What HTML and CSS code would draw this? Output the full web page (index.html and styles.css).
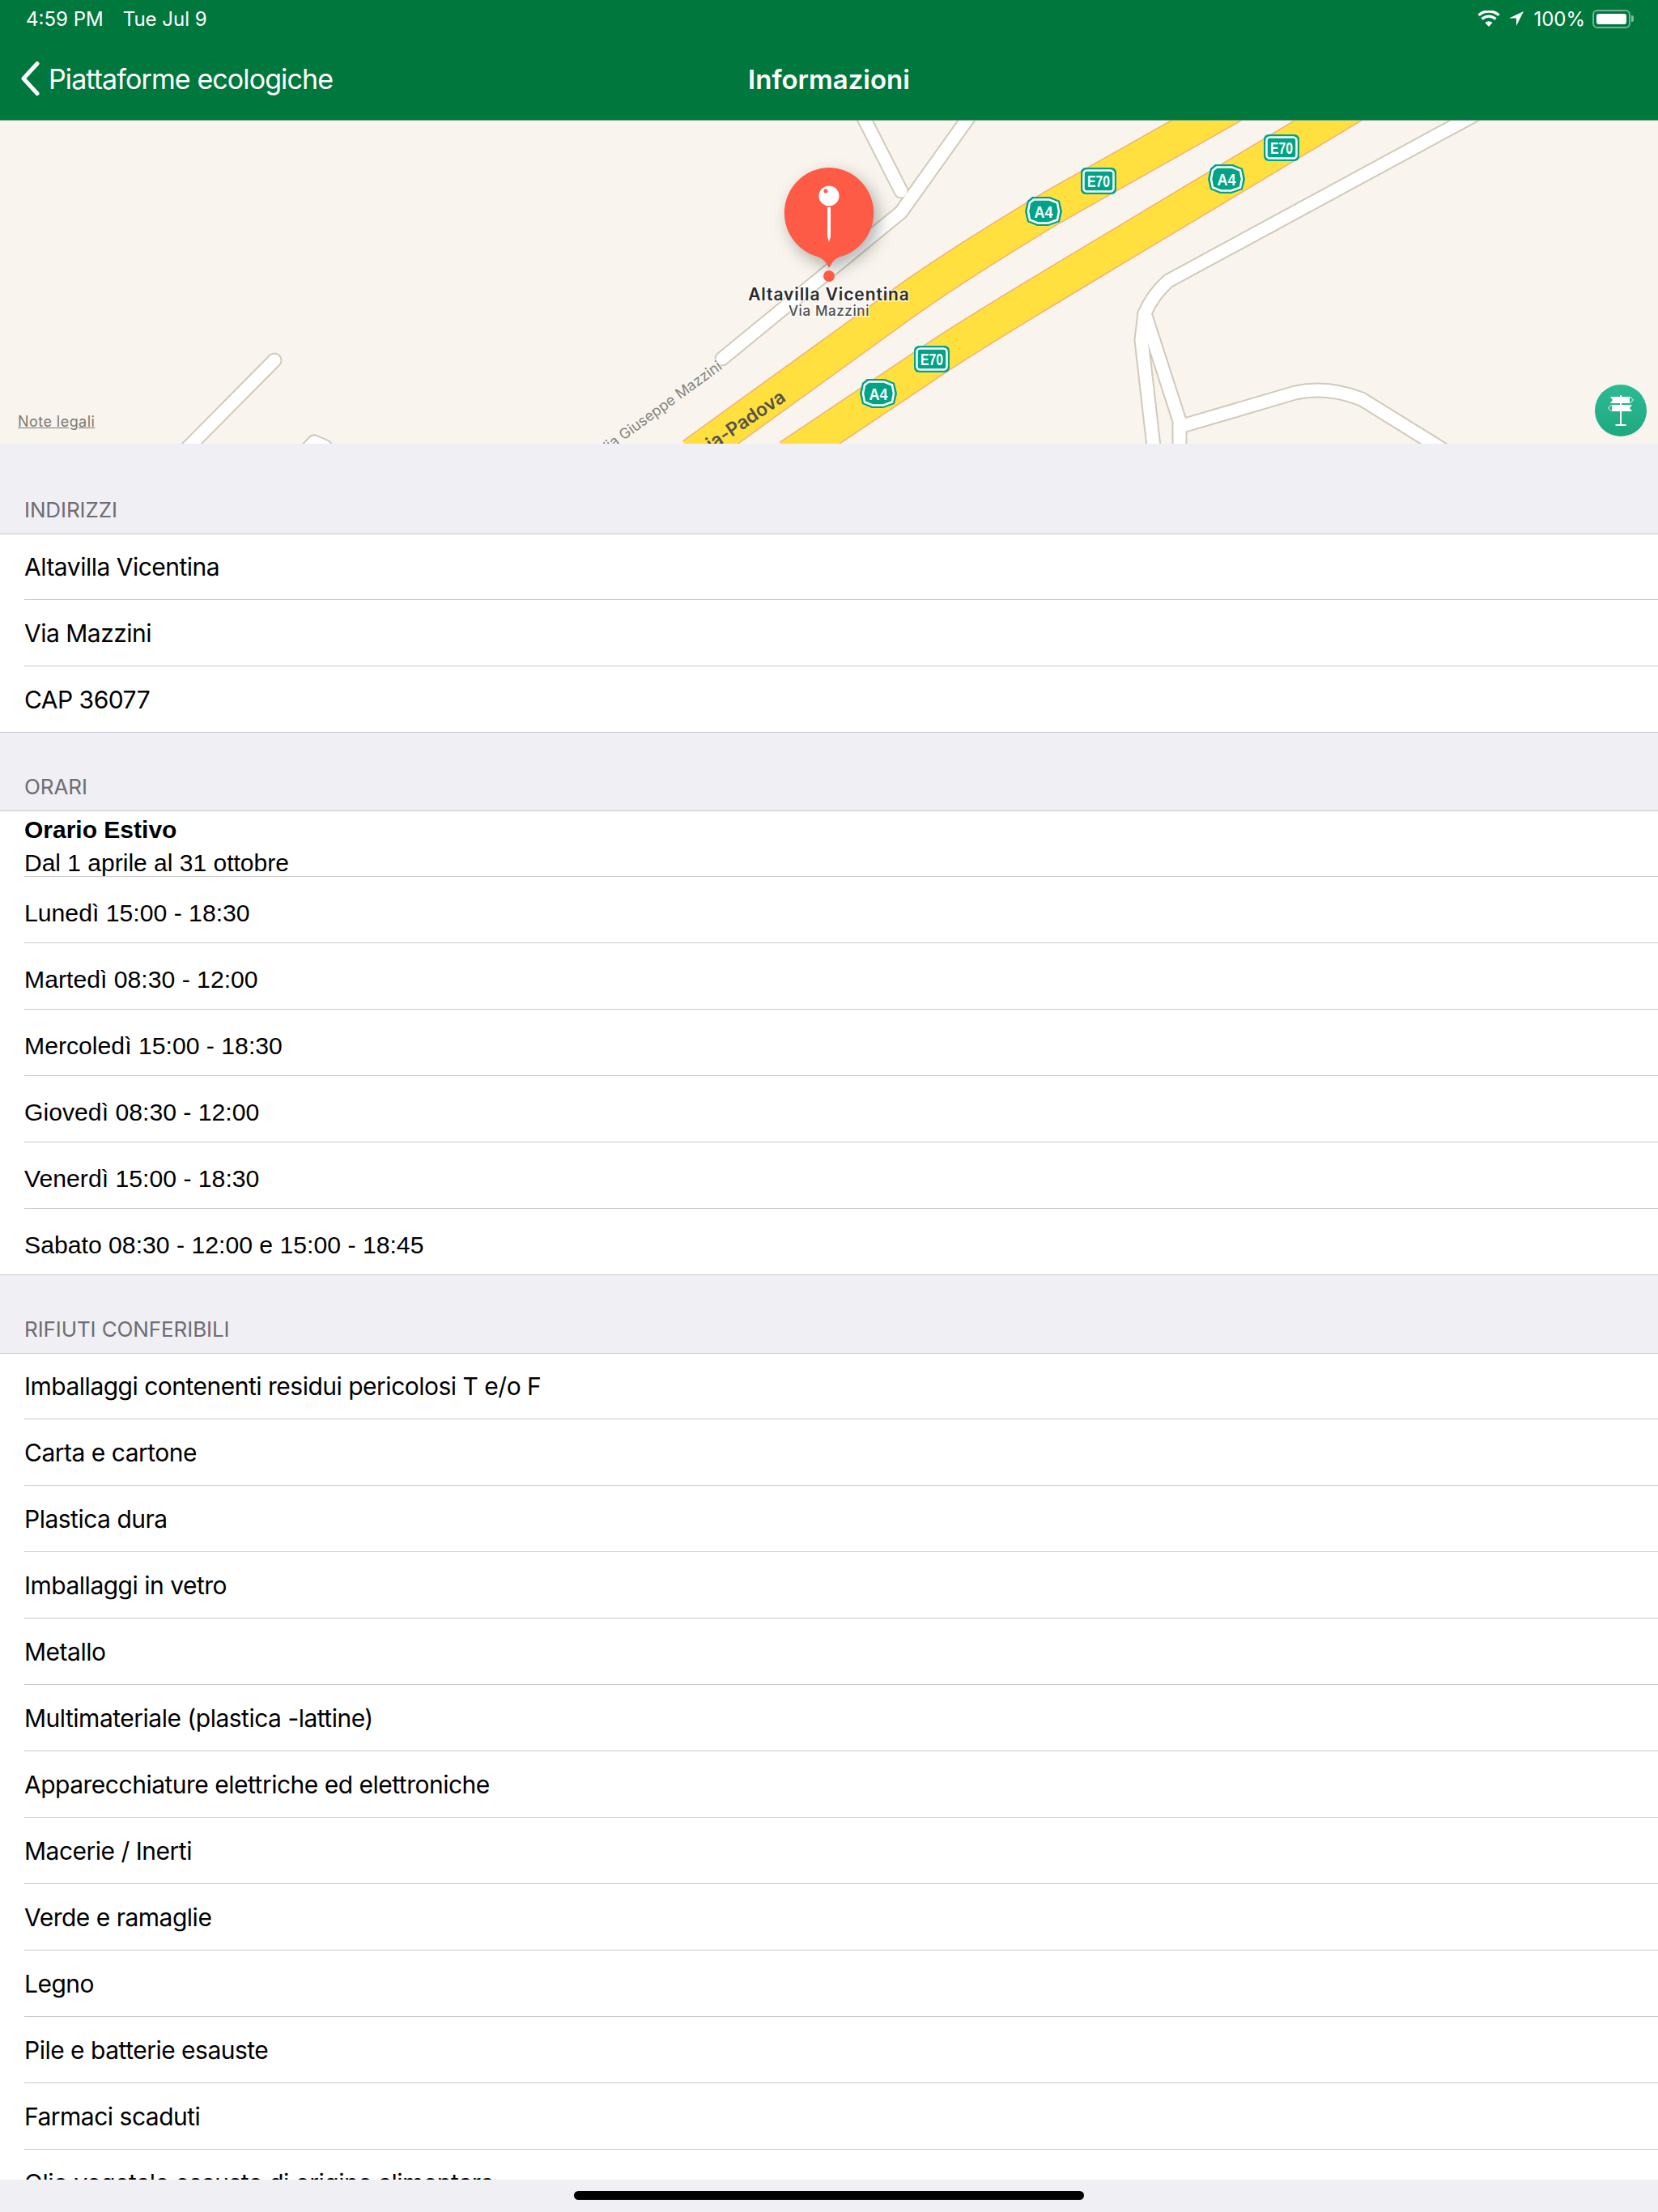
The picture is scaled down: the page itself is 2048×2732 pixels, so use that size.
FILE: index.html
```html
<!DOCTYPE html>
<html lang="it">
<head>
  <meta charset="UTF-8">
  <meta name="viewport" content="width=device-width, initial-scale=1">
  <title>Informazioni</title>
  <link rel="stylesheet" href="styles.css">
</head>
<body>
  <div class="screen">
    <header class="topbar">
      <div class="statusbar">
        <div class="status-time">
          <span>4:59 PM</span>
          <span>Tue Jul 9</span>
        </div>
        <div class="status-right">
          <svg class="icon-wifi" width="28" height="20" viewBox="0 0 28 20">
            <path d="M14 20l-4.500-5a6.500 6.500 0 0 1 9 0z" fill="#fff"/>
            <path d="M5.500 10.500a12.500 12.500 0 0 1 17 0" fill="none" stroke="#fff" stroke-width="3.400"/>
            <path d="M1.500 5.800a18.500 18.500 0 0 1 25 0" fill="none" stroke="#fff" stroke-width="3.400"/>
          </svg>
          <svg class="icon-arrow" width="20" height="20" viewBox="0 0 20 20">
            <path d="M19 1L1 9.500h9V19z" fill="#fff"/>
          </svg>
          <span>100%</span>
          <div class="battery">
            <div class="battery-body"><div class="battery-fill"></div></div>
            <div class="battery-tip"></div>
          </div>
        </div>
      </div>
      <nav class="navbar">
        <a class="back" href="#">
          <svg width="26" height="44" viewBox="0 0 26 44">
            <path d="M22 3.500L5 22l17 18.500" fill="none" stroke="#fff" stroke-width="5" stroke-linecap="round" stroke-linejoin="round"/>
          </svg>
          <span>Piattaforme ecologiche</span>
        </a>
        <h1>Informazioni</h1>
      </nav>
    </header>

    <div class="map">
      <svg class="map-canvas" width="2048" height="400" viewBox="0 148 2048 400">
        <g class="road-edge">
          <path d="M1064 140L1113 236"/>
          <path d="M1200 140L1113 262L892 443"/>
          <path d="M1825 140L1443 347Q1424 364 1414 387L1457 520V560"/>
          <path d="M1414 387L1410 420L1426 560"/>
          <path d="M1457 527L1600 485Q1640 476 1682 493L1790 560"/>
          <path d="M339 445L225 560"/>
          <path d="M375 560L388 546L402 552"/>
        </g>
        <g class="road-fill">
          <path d="M1064 140L1113 236"/>
          <path d="M1200 140L1113 262L892 443"/>
          <path d="M1825 140L1443 347Q1424 364 1414 387L1457 520V560"/>
          <path d="M1414 387L1410 420L1426 560"/>
          <path d="M1457 527L1600 485Q1640 476 1682 493L1790 560"/>
          <path d="M339 445L225 560"/>
          <path d="M375 560L388 546L402 552"/>
        </g>
        <g class="highway-edge">
          <path d="M1580 98L1300 256C1240 292 1170 335 1112 377L856 562"/>
          <path d="M1720 101L1400 293C1320 341 1220 400 1160 440L975 564"/>
        </g>
        <g class="highway-fill">
          <path d="M1580 98L1300 256C1240 292 1170 335 1112 377L856 562"/>
          <path d="M1720 101L1400 293C1320 341 1220 400 1160 440L975 564"/>
        </g>

        <text class="road-label" transform="translate(893 455) rotate(-36)" text-anchor="end">Via Giuseppe Mazzini</text>
        <text class="highway-label" transform="translate(972 494) rotate(-34)" text-anchor="end">Brescia-Padova</text>

        <g class="shield" transform="translate(1357 224)"><rect x="-22" y="-17" width="44" height="33" rx="6"/><rect class="shield-line" x="-18.500" y="-13.500" width="37" height="26" rx="4"/><text y="7" textLength="28" lengthAdjust="spacingAndGlyphs">E70</text></g>
        <g class="shield" transform="translate(1583 183)"><rect x="-22" y="-17" width="44" height="33" rx="6"/><rect class="shield-line" x="-18.500" y="-13.500" width="37" height="26" rx="4"/><text y="7" textLength="28" lengthAdjust="spacingAndGlyphs">E70</text></g>
        <g class="shield" transform="translate(1151 444)"><rect x="-22" y="-17" width="44" height="33" rx="6"/><rect class="shield-line" x="-18.500" y="-13.500" width="37" height="26" rx="4"/><text y="7" textLength="28" lengthAdjust="spacingAndGlyphs">E70</text></g>
        <g class="shield" transform="translate(1289 261)"><path d="M-14-18L8-18L20-13L23 0L20 13L6 18L-8 18L-20 13L-23 0L-20-13z"/><path class="shield-line" d="M-12-14.500L7-14.500L17-10.500L19 0L17 10.500L6 14.500L-7 14.500L-17 10.500L-19 0L-17-10.500z"/><text y="7.500" textLength="23" lengthAdjust="spacingAndGlyphs">A4</text></g>
        <g class="shield" transform="translate(1085 486)"><path d="M-14-18L8-18L20-13L23 0L20 13L6 18L-8 18L-20 13L-23 0L-20-13z"/><path class="shield-line" d="M-12-14.500L7-14.500L17-10.500L19 0L17 10.500L6 14.500L-7 14.500L-17 10.500L-19 0L-17-10.500z"/><text y="7.500" textLength="23" lengthAdjust="spacingAndGlyphs">A4</text></g>
        <g class="shield" transform="translate(1515 221)"><path d="M-14-18L8-18L20-13L23 0L20 13L6 18L-8 18L-20 13L-23 0L-20-13z"/><path class="shield-line" d="M-12-14.500L7-14.500L17-10.500L19 0L17 10.500L6 14.500L-7 14.500L-17 10.500L-19 0L-17-10.500z"/><text y="7.500" textLength="23" lengthAdjust="spacingAndGlyphs">A4</text></g>

        <g class="pin">
          <path d="M1024 207a56 56 0 0 1 14 110q-9 3-14 14q-5-11-14-14a56 56 0 0 1 14-110z"/>
        </g>
        <circle class="pin-dot" cx="1024" cy="341" r="7"/>
        <path d="M1022 256h4v36l-2 7l-2-7z" fill="#fff"/>
        <circle cx="1024" cy="242" r="12.500" fill="#fff"/>
        <circle class="pin-dot" cx="1020" cy="236" r="2.500"/>

        <text class="pin-title" x="1024" y="371" text-anchor="middle">Altavilla Vicentina</text>
        <text class="pin-subtitle" x="1024" y="390" text-anchor="middle">Via Mazzini</text>
      </svg>

      <a class="legal" href="#">Note legali</a>

      <button class="tracking" type="button">
        <svg width="64" height="64" viewBox="0 0 64 64">
          <path d="M31 13h2v36h5.500v2h-13v-2H31z" fill="#fff"/>
          <path d="M19 15h24v8H19l3-4z" fill="#fff"/>
          <path d="M43.500 15l4 4-4 4" fill="none" stroke="#fff" stroke-width="1"/>
          <path d="M46 25H21v8h25l-3-4z" fill="#fff"/>
          <path d="M20.500 25l-4 4 4 4" fill="none" stroke="#fff" stroke-width="1"/>
        </svg>
      </button>
    </div>

    <main class="content">
      <section class="group group-first">
        <h2>INDIRIZZI</h2>
        <ul class="rows rows-system">
          <li>Altavilla Vicentina</li>
          <li>Via Mazzini</li>
          <li>CAP 36077</li>
        </ul>
      </section>

      <section class="group">
        <h2>ORARI</h2>
        <ul class="rows rows-hours">
          <li class="row-tight"><strong>Orario Estivo</strong><br>Dal 1 aprile al 31 ottobre</li>
          <li>Lunedì 15:00 - 18:30</li>
          <li>Martedì 08:30 - 12:00</li>
          <li>Mercoledì 15:00 - 18:30</li>
          <li>Giovedì 08:30 - 12:00</li>
          <li>Venerdì 15:00 - 18:30</li>
          <li>Sabato 08:30 - 12:00 e 15:00 - 18:45</li>
        </ul>
      </section>

      <section class="group">
        <h2>RIFIUTI CONFERIBILI</h2>
        <ul class="rows rows-system">
          <li>Imballaggi contenenti residui pericolosi T e/o F</li>
          <li>Carta e cartone</li>
          <li>Plastica dura</li>
          <li>Imballaggi in vetro</li>
          <li>Metallo</li>
          <li>Multimateriale (plastica -lattine)</li>
          <li>Apparecchiature elettriche ed elettroniche</li>
          <li>Macerie / Inerti</li>
          <li>Verde e ramaglie</li>
          <li>Legno</li>
          <li>Pile e batterie esauste</li>
          <li>Farmaci scaduti</li>
          <li>Olio vegetale esausto di origine alimentare</li>
        </ul>
      </section>
    </main>

    <div class="home-bar"><div class="home-indicator"></div></div>
  </div>
</body>
</html>
```

FILE: styles.css
```css
* {
  box-sizing: border-box;
}
html, body {
  margin: 0;
  padding: 0;
}
body {
  font-family: "Liberation Sans", Arial, sans-serif;
  background-color: #efeff4;
  color: #000;
}
.screen {
  width: 2048px;
  height: 2732px;
  display: flex;
  flex-direction: column;
  overflow: hidden;
  position: relative;
}

/* status + nav */
.topbar {
  height: 149px;
  flex: none;
  background-color: #00773d;
  border-bottom: 1px solid #6fa585;
  color: #fff;
  font-family: Inter, "Noto Sans", sans-serif;
}
.statusbar {
  height: 40px;
  padding: 6px 30px 0 32px;
  display: flex;
  justify-content: space-between;
  align-items: center;
  font-size: 24px;
}
.status-time {
  display: flex;
  gap: 24px;
}
.status-right {
  display: flex;
  align-items: center;
  gap: 7px;
}
.icon-arrow {
  margin-left: 3px;
  margin-right: 4px;
}
.battery {
  display: flex;
  align-items: center;
  margin-left: 2px;
}
.battery-body {
  width: 47px;
  height: 23px;
  padding: 3px;
  border: 2px solid rgba(255,255,255,0.45);
  border-radius: 6px;
}
.battery-fill {
  height: 100%;
  background-color: #fff;
  border-radius: 3px;
}
.battery-tip {
  width: 3px;
  height: 8px;
  margin-left: 1px;
  background-color: rgba(255,255,255,0.5);
  border-radius: 0 2px 2px 0;
}
.navbar {
  height: 108px;
  padding-top: 7px;
  display: flex;
  align-items: center;
  justify-content: center;
  position: relative;
}
.navbar h1 {
  margin: 0;
  font-size: 33px;
  font-weight: 600;
}
.back {
  position: absolute;
  left: 24px;
  top: 35px;
  display: flex;
  align-items: center;
  gap: 10px;
  color: #fff;
  text-decoration: none;
  font-size: 34px;
  letter-spacing: -0.9px;
}

/* map */
.map {
  height: 399px;
  flex: none;
  background-color: #f9f5ee;
  position: relative;
  overflow: hidden;
}
.map-canvas {
  display: block;
  margin-top: -1px;
}
.road-edge path {
  fill: none;
  stroke: #d2c9ba;
  stroke-width: 19;
  stroke-linecap: round;
  stroke-linejoin: round;
}
.road-fill path {
  fill: none;
  stroke: #fff;
  stroke-width: 15;
  stroke-linecap: round;
  stroke-linejoin: round;
}
.highway-edge path {
  fill: none;
  stroke: #f2b272;
  stroke-width: 44;
}
.highway-fill path {
  fill: none;
  stroke: #ffe03f;
  stroke-width: 41;
}
.road-label {
  font-family: Inter, sans-serif;
  font-size: 18px;
  fill: #85857f;
  stroke: #f9f5ee;
  stroke-width: 2px;
  paint-order: stroke;
}
.highway-label {
  font-family: Inter, sans-serif;
  font-size: 23px;
  font-weight: 600;
  fill: #55534a;
}
.shield path, .shield rect {
  fill: #00a385;
}
.shield .shield-line {
  fill: none;
  stroke: #fff;
  stroke-width: 2.5;
}
.shield text {
  font-family: "Liberation Sans", sans-serif;
  font-size: 20px;
  font-weight: bold;
  fill: #fff;
  text-anchor: middle;
}
.pin {
  fill: #fe5b47;
  filter: drop-shadow(6px 8px 10px rgba(0,0,0,0.3));
}
.pin-dot {
  fill: #fe5b47;
}
.pin-title {
  font-family: Inter, sans-serif;
  font-size: 21px;
  font-weight: 600;
  letter-spacing: 0.9px;
  fill: #2c2c2c;
  stroke: #fff;
  stroke-width: 3px;
  stroke-opacity: 0.7;
  paint-order: stroke;
}
.pin-subtitle {
  font-family: Inter, sans-serif;
  font-size: 17px;
  font-weight: 500;
  letter-spacing: 0.6px;
  fill: #4e4e4e;
  stroke: #fff;
  stroke-width: 3px;
  stroke-opacity: 0.7;
  paint-order: stroke;
}
.legal {
  position: absolute;
  left: 22px;
  top: 361px;
  font-family: Inter, sans-serif;
  font-size: 18px;
  letter-spacing: 0.45px;
  color: #7b7a72;
}
.tracking {
  position: absolute;
  left: 1970px;
  top: 326px;
  width: 64px;
  height: 64px;
  padding: 0;
  border: none;
  border-radius: 50%;
  background: linear-gradient(#2dbb92, #1fa880);
}
.tracking svg {
  display: block;
}

/* table */
.content {
  flex: 1;
  overflow: hidden;
  min-height: 0;
}
.group h2 {
  height: 97px;
  margin: 0;
  padding: 0 30px 9px;
  display: flex;
  align-items: flex-end;
  border-bottom: 1px solid #c8c7cc;
  font-family: Inter, "Noto Sans", sans-serif;
  font-size: 26px;
  font-weight: 400;
  letter-spacing: -0.1px;
  line-height: 40px;
  color: #6d6d72;
}
.group-first h2 {
  height: 112px;
}
.rows {
  margin: 0;
  padding: 0;
  list-style: none;
  background-color: #fff;
  border-bottom: 1px solid #c8c7cc;
}
.rows li {
  height: 82px;
  margin-left: 30px;
  display: flex;
  align-items: center;
  border-bottom: 1px solid #c8c7cc;
  font-size: 30px;
}
.rows li:first-child {
  height: 81px;
}
.rows li:last-child {
  height: 81px;
  border-bottom: none;
}
.rows-system li {
  font-family: Inter, "Noto Sans", sans-serif;
  letter-spacing: -0.5px;
}
.rows-hours li {
  padding-top: 8px;
  font-size: 30.2px;
}
.rows-hours .row-tight {
  display: block;
  line-height: 41px;
  padding-top: 2px;
  font-size: 30px;
  white-space: nowrap;
}

.home-bar {
  height: 40px;
  flex: none;
  background-color: #efeff4;
  padding-top: 14px;
}
.home-indicator {
  width: 630px;
  height: 11px;
  margin: 0 auto;
  background-color: #000;
  border-radius: 6px;
}
```
